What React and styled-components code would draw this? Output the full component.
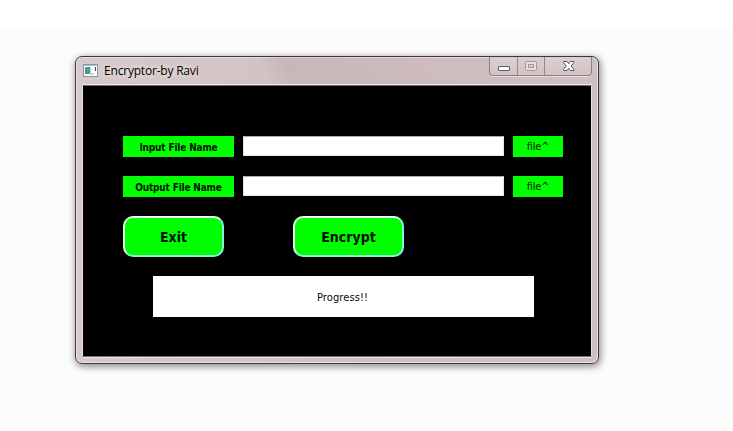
import React from "react";
import styled, { createGlobalStyle } from "styled-components";

const GlobalStyle = createGlobalStyle`
  * { box-sizing: border-box; }
  body { margin: 0; background: #fff; overflow: hidden; }
`;

const Page = styled.div`
  height: 431px;
  padding: 28px 0 0 75px;
  background: linear-gradient(#fff 0 28px, #fcfcfc 28px);
`;

const Window = styled.section`
  width: 524px;
  height: 308px;
  margin-top: 28px;
  padding: 0 5px 4px 6px;
  border: 1px solid #40353b;
  border-radius: 7px;
  background: linear-gradient(90deg, #d8caca 0%, #d4c4c4 30%, #cebfbf 60%, #cfc0c0 100%);
  box-shadow: inset 0 0 0 1px #eee2e2, 1px 2px 7px 1px rgba(0, 0, 0, 0.42);
`;

const TitleBar = styled.header`
  display: flex;
  align-items: flex-start;
  height: 28px;
  margin: 0 -4px 0 -5px;
  padding: 0 5px 0 6px;
  background: linear-gradient(62deg, transparent 36%, rgba(180, 160, 163, 0.32) 41%, rgba(205, 180, 184, 0.28) 65%, transparent 92%);
  border-radius: 6px 6px 0 0;
`;

const AppIcon = styled.svg`
  width: 16px;
  height: 14px;
  margin-top: 7px;
  flex: none;
`;

const Title = styled.h1`
  flex: 1;
  margin: 5px 0 0 5px;
  font: 400 12px/18px "Open Sans", "Noto Sans", sans-serif;
  letter-spacing: -0.2px;
  color: #000;
  text-shadow: 0 0 6px #fff;
  white-space: nowrap;
`;

const Controls = styled.div`
  display: flex;
  width: 103px;
  height: 19px;
  border: 1px solid #8e8082;
  border-top: 0;
  border-radius: 0 0 4px 4px;
  background: linear-gradient(#dccfcf, #d3c3c4);
  box-shadow: 0 1px 0 #e8dddd;
`;

const Control = styled.button`
  display: flex;
  flex: none;
  width: ${(p) => p.$width}px;
  padding: 0;
  border: 0;
  border-left: ${(p) => (p.$first ? "0" : "1px solid #958688")};
  background: none;

  svg { display: block; }
`;

const Client = styled.main`
  width: 510px;
  height: 272px;
  padding: 50px 27px 0 40px;
  border: 1px solid;
  border-color: #766b6e #eadfdf #766b6e #eadfdf;
  background: #000;
  box-shadow: 0 -1px 0 #eee4e4, 0 1px 0 #eee4e4;
`;

const FieldRow = styled.div`
  display: grid;
  grid-template-columns: 111px 261px 50px;
  grid-template-rows: 21px;
  column-gap: 9px;
  margin-bottom: 19px;
`;

const Label = styled.label`
  background: #0f0;
  color: #001000;
  font: 700 10px/23px "DejaVu Sans Condensed", "DejaVu Sans", sans-serif;
  font-stretch: condensed;
  letter-spacing: -0.17px;
  text-align: center;
  white-space: nowrap;
`;

const Input = styled.input`
  width: 100%;
  height: 20px;
  padding: 0 3px;
  border: 1px solid #e4e4e4;
  border-top-color: #aaa;
  border-radius: 0;
  outline: 0;
  background: #fff;
`;

const FileButton = styled.button`
  padding: 1px 0 0;
  border: 0;
  background: #0f0;
  color: #002000;
  font: 400 11px/20px "DejaVu Sans Condensed", "DejaVu Sans", sans-serif;
  font-stretch: condensed;
  letter-spacing: -0.2px;
`;

const Actions = styled.div`
  display: flex;
  gap: 69px;
`;

const ActionButton = styled.button`
  width: ${(p) => p.$width}px;
  height: 41px;
  padding: 1px 0 0;
  border: 2px solid;
  border-color: #f0fff0 #85f4da #85f4da #e8ffe8;
  border-radius: 10px;
  background: #0f0;
  color: #001000;
  font: 700 14px/36px "DejaVu Sans Condensed", "DejaVu Sans", sans-serif;
  font-stretch: condensed;
`;

const Progress = styled.output`
  display: block;
  width: 381px;
  height: 41px;
  margin: 19px 0 0 30px;
  background: #fff;
  color: #080814;
  font: 400 11px/43px "DejaVu Sans Condensed", "DejaVu Sans", sans-serif;
  font-stretch: condensed;
  letter-spacing: 0.1px;
  text-indent: -2px;
  text-align: center;
`;

function WindowIcon() {
  return (
    <AppIcon viewBox="0 0 16 14" shapeRendering="crispEdges">
      <rect x="0.5" y="0.5" width="14" height="12" fill="#f8ffff" stroke="#8d94a8" />
      <rect x="1" y="1" width="13" height="1" fill="#b3bed0" />
      <rect x="2" y="3" width="5" height="7" fill="#519889" />
      <rect x="7" y="3" width="1" height="7" fill="#bfd7d4" />
      <rect x="7" y="9" width="4" height="2" fill="#c8d8d8" />
      <rect x="12" y="3" width="1" height="4" fill="#354563" />
    </AppIcon>
  );
}

export default function App() {
  return (
    <>
      <GlobalStyle />
      <Page>
        <Window>
          <TitleBar>
            <WindowIcon />
            <Title>Encryptor-by Ravi</Title>
            <Controls>
              <Control $width={27} $first aria-label="Minimize">
                <svg width="27" height="18">
                  <rect x="8.5" y="9.5" width="11" height="4" rx="0.5" fill="#fff" stroke="#5b5a68" />
                </svg>
              </Control>
              <Control $width={27} aria-label="Maximize">
                <svg width="26" height="18">
                  <rect x="7.5" y="4.5" width="11" height="9" rx="1" fill="#e6dddd" stroke="#a2999d" />
                  <rect x="10.5" y="7.5" width="5" height="3" fill="#d5c8c9" stroke="#a2999d" />
                </svg>
              </Control>
              <Control $width={47} aria-label="Close">
                <svg width="46" height="18">
                  <path d="M18.5 4.5h3.5l1.7 2.3 1.7-2.3h3.5v1l-2.8 3.5 2.8 3.5v1h-3.5l-1.7-2.3-1.7 2.3h-3.5v-1l2.8-3.5-2.8-3.5z" fill="#fff" stroke="#555663" strokeLinejoin="round" />
                </svg>
              </Control>
            </Controls>
          </TitleBar>
          <Client>
            <FieldRow>
              <Label htmlFor="input-file">Input File Name</Label>
              <Input id="input-file" />
              <FileButton>file^</FileButton>
            </FieldRow>
            <FieldRow>
              <Label htmlFor="output-file">Output File Name</Label>
              <Input id="output-file" />
              <FileButton>file^</FileButton>
            </FieldRow>
            <Actions>
              <ActionButton $width={101}>Exit</ActionButton>
              <ActionButton $width={111}>Encrypt</ActionButton>
            </Actions>
            <Progress>Progress!!</Progress>
          </Client>
        </Window>
      </Page>
    </>
  );
}
